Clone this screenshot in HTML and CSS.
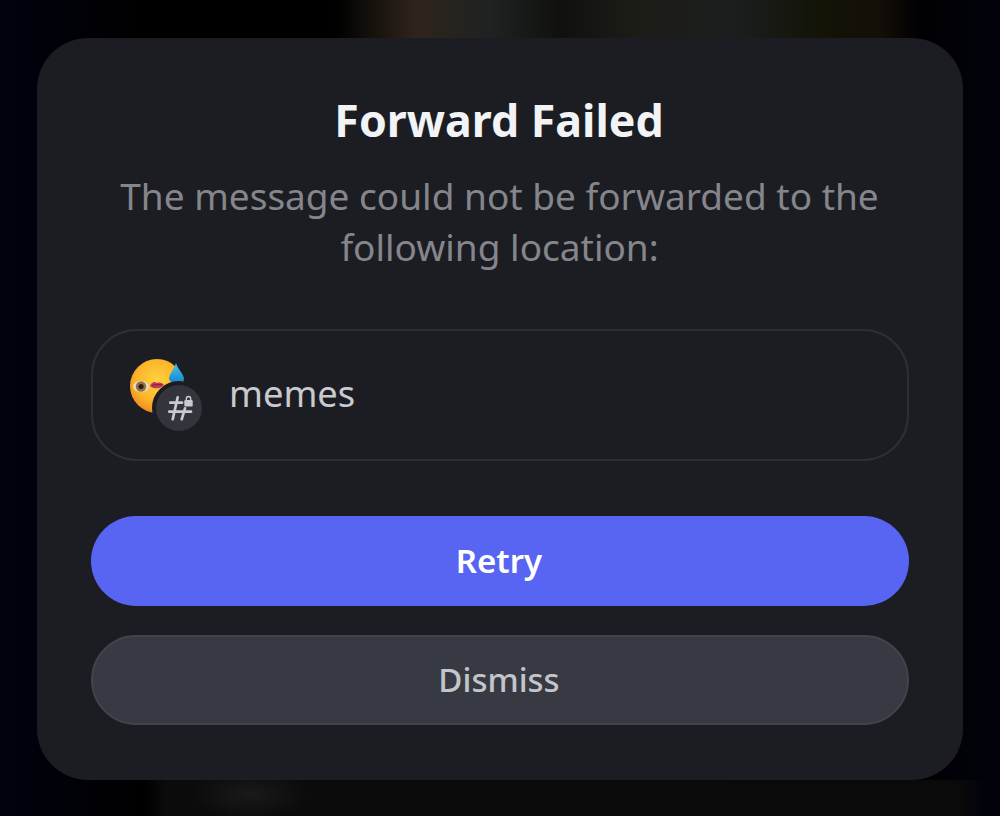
FILE: index.html
```html
<!DOCTYPE html>
<html lang="en">
<head>
<meta charset="utf-8">
<title>Forward Failed</title>
<link rel="stylesheet" href="styles.css">
</head>
<body>
<div class="backdrop">
  <section class="card">
    <h1 class="title">Forward Failed</h1>
    <p class="message">The message could not be forwarded to the following location:</p>
    <div class="location">
      <div class="avatar">
        <svg class="emoji" viewBox="0 0 60 60" aria-hidden="true">
          <defs>
            <radialGradient id="face" cx="0.5" cy="0.4" r="0.62">
              <stop offset="0" stop-color="#ffd23f"/>
              <stop offset="0.6" stop-color="#fcb62a"/>
              <stop offset="1" stop-color="#ee8a1a"/>
            </radialGradient>
            <linearGradient id="drop" x1="0" y1="0" x2="0" y2="1">
              <stop offset="0" stop-color="#4cc4ec"/>
              <stop offset="1" stop-color="#0f86cc"/>
            </linearGradient>
          </defs>
          <circle cx="28" cy="28" r="27" fill="url(#face)"/>
          <path d="M47 5 C49 12 55 16 55 21 A8 7 0 0 1 40 21 C40 16 45 12 47 5Z" fill="url(#drop)"/>
          <ellipse cx="12" cy="28.500" rx="8" ry="5.800" fill="#e6dcc4"/>
          <circle cx="12" cy="28.500" r="5.200" fill="#8f7444"/>
          <circle cx="12" cy="28.500" r="2.600" fill="#2b2116"/>
          <path d="M21 28 C23 23.500 26 23.500 28 25 C30 24 33 24.500 35 27 C32 31 24 31.500 21 28Z" fill="#c4375e"/>
          <path d="M23 27.500 C26 26.500 29 26.500 33 26.800" fill="none" stroke="#6e1c34" stroke-width="0.900"/>
        </svg>
        <div class="channel-badge">
          <svg viewBox="0 0 46 46" class="channel-icon" aria-hidden="true">
            <path d="M21.700 12.300 L16.700 34.300 M29 23.300 L25.700 34.300 M14.300 17.700 H26 M13.300 26.700 H35" fill="none" stroke="#c9cbd1" stroke-width="2.700" stroke-linecap="round"/>
            <rect x="28.300" y="15" width="8.400" height="6.500" rx="1.200" fill="#c9cbd1"/>
            <path d="M30.300 15.500 V13.700 A2.200 2.200 0 0 1 34.700 13.700 V15.500" fill="none" stroke="#c9cbd1" stroke-width="1.400"/>
          </svg>
        </div>
      </div>
      <span class="location-name">memes</span>
    </div>
    <button class="btn btn-primary" type="button">Retry</button>
    <button class="btn btn-secondary" type="button">Dismiss</button>
  </section>
</div>
</body>
</html>
```
FILE: styles.css
```css
* { box-sizing: border-box; }
html, body { margin: 0; height: 100%; }
body {
  font-family: "Noto Sans", "Liberation Sans", sans-serif;
  background: #000;
}
.backdrop {
  width: 1000px;
  height: 816px;
  padding: 38px 37px 36px;
  background:
    linear-gradient(90deg, rgba(50,38,28,0) 335px, rgba(52,40,30,.9) 415px, rgba(34,38,38,.9) 490px, rgba(26,28,22,.6) 560px, rgba(36,36,30,.8) 640px, rgba(34,38,38,.8) 730px, rgba(24,24,8,.8) 820px, rgba(28,20,10,.7) 880px, rgba(20,16,8,0) 920px) top / 100% 38px no-repeat,
    radial-gradient(ellipse 60px 26px at 250px 14px, rgba(32,32,32,.7), rgba(32,32,32,0)) bottom / 100% 36px no-repeat,
    linear-gradient(90deg, rgba(10,10,10,0) 145px, #0b0b0c 165px, #0a0a0b 960px, rgba(10,10,10,0) 985px) bottom / 100% 36px no-repeat,
    linear-gradient(90deg, #02020f 0, #01010c 30px, #000 140px, #000 880px, #02020c 1000px);
}
.card {
  height: 742px;
  padding: 57px 54px 0;
  border-radius: 51px;
  background: #1c1d23;
  display: flex;
  flex-direction: column;
  align-items: stretch;
}
.title {
  margin: 0;
  padding-right: 2px;
  font-size: 44.7px;
  line-height: 50px;
  font-weight: 700;
  color: #f2f3f5;
  text-align: center;
}
.message {
  margin: 25px 0 0;
  padding-right: 1px;
  font-size: 37px;
  line-height: 51px;
  color: #85868c;
  text-align: center;
}
.location {
  margin-top: 57px;
  height: 132px;
  border: 2px solid #2e2f36;
  border-radius: 46px;
  display: flex;
  align-items: center;
  padding-left: 36px;
  gap: 26px;
}
.avatar {
  position: relative;
  width: 74px;
  height: 62px;
  flex: none;
  margin-top: -12px;
}
.emoji { width: 60px; height: 60px; display: block; }
.channel-badge {
  position: absolute;
  left: 23px;
  top: 23px;
  width: 54px;
  height: 54px;
  border-radius: 50%;
  background: #33343c;
  border: 4px solid #1c1d23;
}
.channel-icon { display: block; width: 46px; height: 46px; }
.location-name {
  font-size: 36.300px;
  line-height: 46px;
  padding-bottom: 4px;
  color: #c9cacf;
}
.btn {
  display: block;
  width: 100%;
  height: 90px;
  border-radius: 45px;
  font-family: inherit;
  font-size: 33px;
  text-align: center;
  padding: 0 2px 2px 0;
}
.btn-primary {
  margin-top: 55px;
  border: 0;
  font-weight: 600;
  background: #5865f2;
  color: #fff;
}
.btn-secondary {
  margin-top: 29px;
  border: 2px solid #42434c;
  background: #383a43;
  font-weight: 500;
  color: #c4c5ca;
}
```
